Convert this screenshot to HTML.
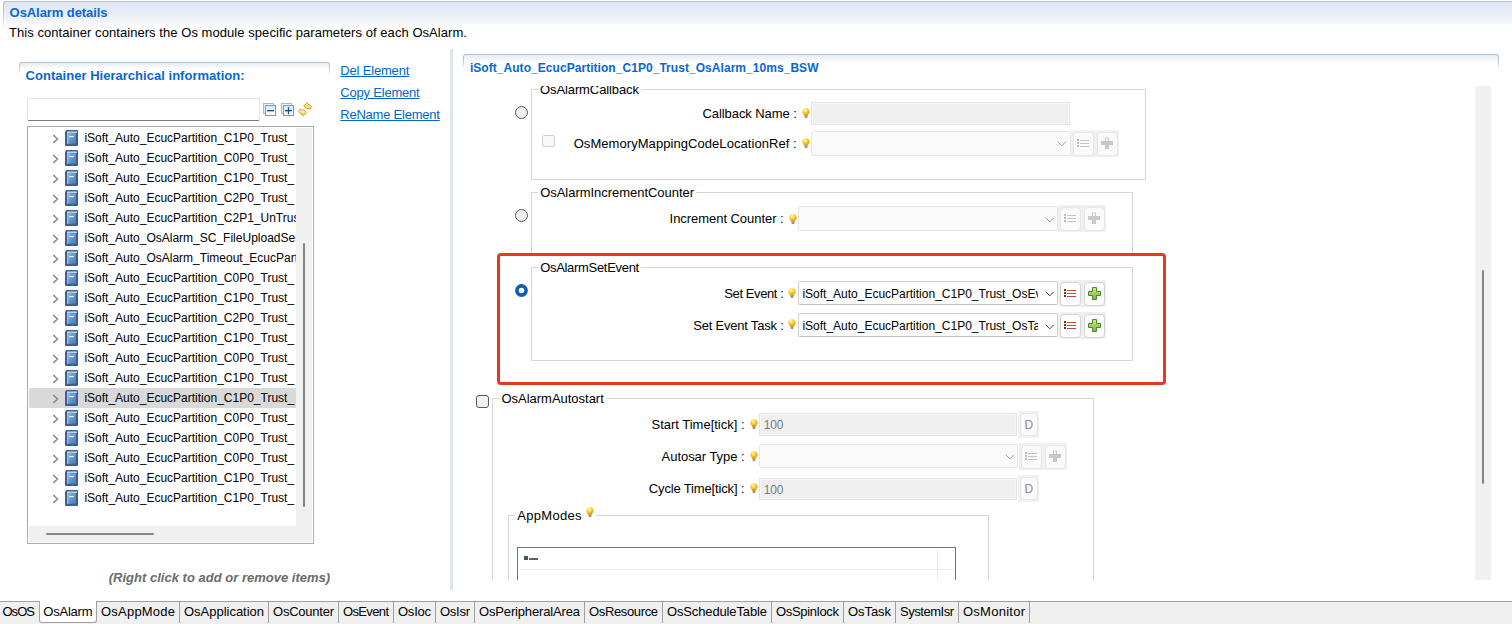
<!DOCTYPE html>
<html><head><meta charset="utf-8"><style>
div{box-sizing:border-box;}
html,body{margin:0;padding:0;width:1512px;height:624px;overflow:hidden;background:#fff;font-family:'Liberation Sans', sans-serif;}
</style></head><body>
<div style="position:relative;width:1512px;height:624px;overflow:hidden;">
<div style="position:absolute;left:3px;top:1px;width:1600px;height:28px;border:1px solid #b3c5dc;border-bottom:none;border-right:none;border-radius:3px 0 0 0;background:linear-gradient(#dde5f0 0px,#f3f6fa 21px,#ffffff 23px);"></div>
<div style="position:absolute;left:2px;top:12px;width:4px;height:20px;background:linear-gradient(rgba(255,255,255,0),#fff);"></div>
<span id="t0" style="position:absolute;left:9.60px;top:6.00px;font-size:13px;line-height:1;font-weight:bold;font-style:normal;color:#0568d6;white-space:nowrap;letter-spacing:-0.071px;">OsAlarm details</span>
<span id="t1" style="position:absolute;left:9.00px;top:25.80px;font-size:13px;line-height:1;font-weight:normal;font-style:normal;color:#000;white-space:nowrap;letter-spacing:0.056px;">This container containers the Os module specific parameters of each OsAlarm.</span>
<div style="position:absolute;left:19px;top:62px;width:311px;height:12px;border:1px solid #b3c5dc;border-bottom:none;border-radius:3px 3px 0 0;background:linear-gradient(#e6ecf4,#ffffff 6px);"></div>
<div style="position:absolute;left:17px;top:66px;width:316px;height:10px;background:linear-gradient(rgba(255,255,255,0),#fff);"></div>
<span id="t2" style="position:absolute;left:25.60px;top:69.30px;font-size:13px;line-height:1;font-weight:bold;font-style:normal;color:#0568d6;white-space:nowrap;letter-spacing:0.025px;">Container Hierarchical information:</span>
<div style="position:absolute;left:27px;top:98px;width:233px;height:23px;border:1px solid #e3e3e3;border-bottom:1px solid #7a7a7a;border-radius:2px;background:#fff;"></div>
<svg style="position:absolute;left:263px;top:103px" width="14" height="14" viewBox="0 0 14 14"><defs><linearGradient id="gim" x1="0" y1="0" x2="0" y2="1"><stop offset="0" stop-color="#cfe6fb"/><stop offset="1" stop-color="#ffffff"/></linearGradient></defs><rect x="0.5" y="0.5" width="10" height="10" fill="#e6f0fa" stroke="#a9b8cc"/><rect x="2.5" y="2.5" width="10" height="10" fill="url(#gim)" stroke="#8596ae"/><rect x="4" y="7" width="7" height="1.3" fill="#1d4a7a"/></svg>
<svg style="position:absolute;left:281px;top:103px" width="14" height="14" viewBox="0 0 14 14"><defs><linearGradient id="gip" x1="0" y1="0" x2="0" y2="1"><stop offset="0" stop-color="#cfe6fb"/><stop offset="1" stop-color="#ffffff"/></linearGradient></defs><rect x="0.5" y="0.5" width="10" height="10" fill="#e6f0fa" stroke="#a9b8cc"/><rect x="2.5" y="2.5" width="10" height="10" fill="url(#gip)" stroke="#8596ae"/><rect x="4" y="7" width="7" height="1.3" fill="#1d4a7a"/><rect x="6.85" y="4.2" width="1.3" height="7" fill="#1d4a7a"/></svg>
<svg style="position:absolute;left:294px;top:98px" width="22" height="22" viewBox="0 0 22 22"><defs><linearGradient id="sg" x1="0" y1="0" x2="0" y2="1"><stop offset="0" stop-color="#fffbe0"/><stop offset="1" stop-color="#f3cf55"/></linearGradient></defs><path d="M13.06 4.61 L9.79 7.88 L12.72 11.14 L13.92 10.03 L16.16 11.4 L17.45 8.56 L15.47 6.5 L13.92 6.67 Z" fill="url(#sg)" stroke="#d99a10" stroke-width="0.95" stroke-linejoin="miter"/><path d="M9.14 17.89 L12.41 14.62 L9.48 11.36 L8.28 12.47 L6.04 11.1 L4.75 13.94 L6.73 16.0 L8.28 15.83 Z" fill="url(#sg)" stroke="#d99a10" stroke-width="0.95" stroke-linejoin="miter"/></svg>
<div style="position:absolute;left:27px;top:126px;width:287px;height:418px;border:1px solid #a9abb0;background:#fff;"></div>
<div style="position:absolute;left:296px;top:128px;width:16px;height:414px;background:#f0f0f0;"></div>
<div style="position:absolute;left:29px;top:526px;width:283px;height:16px;background:#f0f0f0;"></div>
<div style="position:absolute;left:303px;top:243px;width:2px;height:264px;background:#858585;border-radius:1px;"></div>
<div style="position:absolute;left:46px;top:533px;width:108px;height:2px;background:#858585;border-radius:1px;"></div>
<div style="position:absolute;left:28px;top:127px;width:268px;height:399px;overflow:hidden;">
<svg style="position:absolute;left:24px;top:6.6px" width="7" height="10" viewBox="0 0 7 10"><path d="M1.3 0.9 L5.5 4.9 L1.3 8.9" fill="none" stroke="#858585" stroke-width="1.45"/></svg>
<div style="position:absolute;left:37px;top:3px;width:13px;height:16px"><svg width="13" height="16" viewBox="0 0 13 16"><defs><linearGradient id="bk" x1="0" y1="0" x2="1" y2="1"><stop offset="0" stop-color="#8fbbe6"/><stop offset="1" stop-color="#4276b8"/></linearGradient></defs><path d="M1.5 0 L12 0 Q13 0 13 1 L13 15 Q13 16 12 16 L1 16 Q0 16 0 15 L0 1.5 Z" fill="#3a5f95"/><rect x="2" y="1.6" width="10" height="1.1" fill="#ffffff"/><rect x="2" y="3.2" width="9" height="10.6" fill="url(#bk)"/><rect x="2" y="3.2" width="1.2" height="10.6" fill="#a8caee" opacity="0.8"/><rect x="4.2" y="6" width="4.8" height="1.1" fill="#eaf3fc"/></svg></div>
<span id="t3" style="position:absolute;left:56.40px;top:4.84px;font-size:12px;line-height:1;font-weight:normal;font-style:normal;color:#000;white-space:nowrap;letter-spacing:0.000px;">iSoft_Auto_EcucPartition_C1P0_Trust_</span>
<svg style="position:absolute;left:24px;top:26.6px" width="7" height="10" viewBox="0 0 7 10"><path d="M1.3 0.9 L5.5 4.9 L1.3 8.9" fill="none" stroke="#858585" stroke-width="1.45"/></svg>
<div style="position:absolute;left:37px;top:23px;width:13px;height:16px"><svg width="13" height="16" viewBox="0 0 13 16"><defs><linearGradient id="bk" x1="0" y1="0" x2="1" y2="1"><stop offset="0" stop-color="#8fbbe6"/><stop offset="1" stop-color="#4276b8"/></linearGradient></defs><path d="M1.5 0 L12 0 Q13 0 13 1 L13 15 Q13 16 12 16 L1 16 Q0 16 0 15 L0 1.5 Z" fill="#3a5f95"/><rect x="2" y="1.6" width="10" height="1.1" fill="#ffffff"/><rect x="2" y="3.2" width="9" height="10.6" fill="url(#bk)"/><rect x="2" y="3.2" width="1.2" height="10.6" fill="#a8caee" opacity="0.8"/><rect x="4.2" y="6" width="4.8" height="1.1" fill="#eaf3fc"/></svg></div>
<span id="t4" style="position:absolute;left:56.40px;top:24.84px;font-size:12px;line-height:1;font-weight:normal;font-style:normal;color:#000;white-space:nowrap;letter-spacing:0.000px;">iSoft_Auto_EcucPartition_C0P0_Trust_</span>
<svg style="position:absolute;left:24px;top:46.6px" width="7" height="10" viewBox="0 0 7 10"><path d="M1.3 0.9 L5.5 4.9 L1.3 8.9" fill="none" stroke="#858585" stroke-width="1.45"/></svg>
<div style="position:absolute;left:37px;top:43px;width:13px;height:16px"><svg width="13" height="16" viewBox="0 0 13 16"><defs><linearGradient id="bk" x1="0" y1="0" x2="1" y2="1"><stop offset="0" stop-color="#8fbbe6"/><stop offset="1" stop-color="#4276b8"/></linearGradient></defs><path d="M1.5 0 L12 0 Q13 0 13 1 L13 15 Q13 16 12 16 L1 16 Q0 16 0 15 L0 1.5 Z" fill="#3a5f95"/><rect x="2" y="1.6" width="10" height="1.1" fill="#ffffff"/><rect x="2" y="3.2" width="9" height="10.6" fill="url(#bk)"/><rect x="2" y="3.2" width="1.2" height="10.6" fill="#a8caee" opacity="0.8"/><rect x="4.2" y="6" width="4.8" height="1.1" fill="#eaf3fc"/></svg></div>
<span id="t5" style="position:absolute;left:56.40px;top:44.84px;font-size:12px;line-height:1;font-weight:normal;font-style:normal;color:#000;white-space:nowrap;letter-spacing:0.000px;">iSoft_Auto_EcucPartition_C1P0_Trust_</span>
<svg style="position:absolute;left:24px;top:66.6px" width="7" height="10" viewBox="0 0 7 10"><path d="M1.3 0.9 L5.5 4.9 L1.3 8.9" fill="none" stroke="#858585" stroke-width="1.45"/></svg>
<div style="position:absolute;left:37px;top:63px;width:13px;height:16px"><svg width="13" height="16" viewBox="0 0 13 16"><defs><linearGradient id="bk" x1="0" y1="0" x2="1" y2="1"><stop offset="0" stop-color="#8fbbe6"/><stop offset="1" stop-color="#4276b8"/></linearGradient></defs><path d="M1.5 0 L12 0 Q13 0 13 1 L13 15 Q13 16 12 16 L1 16 Q0 16 0 15 L0 1.5 Z" fill="#3a5f95"/><rect x="2" y="1.6" width="10" height="1.1" fill="#ffffff"/><rect x="2" y="3.2" width="9" height="10.6" fill="url(#bk)"/><rect x="2" y="3.2" width="1.2" height="10.6" fill="#a8caee" opacity="0.8"/><rect x="4.2" y="6" width="4.8" height="1.1" fill="#eaf3fc"/></svg></div>
<span id="t6" style="position:absolute;left:56.40px;top:64.84px;font-size:12px;line-height:1;font-weight:normal;font-style:normal;color:#000;white-space:nowrap;letter-spacing:0.000px;">iSoft_Auto_EcucPartition_C2P0_Trust_</span>
<svg style="position:absolute;left:24px;top:86.6px" width="7" height="10" viewBox="0 0 7 10"><path d="M1.3 0.9 L5.5 4.9 L1.3 8.9" fill="none" stroke="#858585" stroke-width="1.45"/></svg>
<div style="position:absolute;left:37px;top:83px;width:13px;height:16px"><svg width="13" height="16" viewBox="0 0 13 16"><defs><linearGradient id="bk" x1="0" y1="0" x2="1" y2="1"><stop offset="0" stop-color="#8fbbe6"/><stop offset="1" stop-color="#4276b8"/></linearGradient></defs><path d="M1.5 0 L12 0 Q13 0 13 1 L13 15 Q13 16 12 16 L1 16 Q0 16 0 15 L0 1.5 Z" fill="#3a5f95"/><rect x="2" y="1.6" width="10" height="1.1" fill="#ffffff"/><rect x="2" y="3.2" width="9" height="10.6" fill="url(#bk)"/><rect x="2" y="3.2" width="1.2" height="10.6" fill="#a8caee" opacity="0.8"/><rect x="4.2" y="6" width="4.8" height="1.1" fill="#eaf3fc"/></svg></div>
<span id="t7" style="position:absolute;left:56.40px;top:84.84px;font-size:12px;line-height:1;font-weight:normal;font-style:normal;color:#000;white-space:nowrap;letter-spacing:0.000px;">iSoft_Auto_EcucPartition_C2P1_UnTrust</span>
<svg style="position:absolute;left:24px;top:106.6px" width="7" height="10" viewBox="0 0 7 10"><path d="M1.3 0.9 L5.5 4.9 L1.3 8.9" fill="none" stroke="#858585" stroke-width="1.45"/></svg>
<div style="position:absolute;left:37px;top:103px;width:13px;height:16px"><svg width="13" height="16" viewBox="0 0 13 16"><defs><linearGradient id="bk" x1="0" y1="0" x2="1" y2="1"><stop offset="0" stop-color="#8fbbe6"/><stop offset="1" stop-color="#4276b8"/></linearGradient></defs><path d="M1.5 0 L12 0 Q13 0 13 1 L13 15 Q13 16 12 16 L1 16 Q0 16 0 15 L0 1.5 Z" fill="#3a5f95"/><rect x="2" y="1.6" width="10" height="1.1" fill="#ffffff"/><rect x="2" y="3.2" width="9" height="10.6" fill="url(#bk)"/><rect x="2" y="3.2" width="1.2" height="10.6" fill="#a8caee" opacity="0.8"/><rect x="4.2" y="6" width="4.8" height="1.1" fill="#eaf3fc"/></svg></div>
<span id="t8" style="position:absolute;left:56.40px;top:104.84px;font-size:12px;line-height:1;font-weight:normal;font-style:normal;color:#000;white-space:nowrap;letter-spacing:0.000px;">iSoft_Auto_OsAlarm_SC_FileUploadService</span>
<svg style="position:absolute;left:24px;top:126.6px" width="7" height="10" viewBox="0 0 7 10"><path d="M1.3 0.9 L5.5 4.9 L1.3 8.9" fill="none" stroke="#858585" stroke-width="1.45"/></svg>
<div style="position:absolute;left:37px;top:123px;width:13px;height:16px"><svg width="13" height="16" viewBox="0 0 13 16"><defs><linearGradient id="bk" x1="0" y1="0" x2="1" y2="1"><stop offset="0" stop-color="#8fbbe6"/><stop offset="1" stop-color="#4276b8"/></linearGradient></defs><path d="M1.5 0 L12 0 Q13 0 13 1 L13 15 Q13 16 12 16 L1 16 Q0 16 0 15 L0 1.5 Z" fill="#3a5f95"/><rect x="2" y="1.6" width="10" height="1.1" fill="#ffffff"/><rect x="2" y="3.2" width="9" height="10.6" fill="url(#bk)"/><rect x="2" y="3.2" width="1.2" height="10.6" fill="#a8caee" opacity="0.8"/><rect x="4.2" y="6" width="4.8" height="1.1" fill="#eaf3fc"/></svg></div>
<span id="t9" style="position:absolute;left:56.40px;top:124.84px;font-size:12px;line-height:1;font-weight:normal;font-style:normal;color:#000;white-space:nowrap;letter-spacing:0.000px;">iSoft_Auto_OsAlarm_Timeout_EcucPartition</span>
<svg style="position:absolute;left:24px;top:146.6px" width="7" height="10" viewBox="0 0 7 10"><path d="M1.3 0.9 L5.5 4.9 L1.3 8.9" fill="none" stroke="#858585" stroke-width="1.45"/></svg>
<div style="position:absolute;left:37px;top:143px;width:13px;height:16px"><svg width="13" height="16" viewBox="0 0 13 16"><defs><linearGradient id="bk" x1="0" y1="0" x2="1" y2="1"><stop offset="0" stop-color="#8fbbe6"/><stop offset="1" stop-color="#4276b8"/></linearGradient></defs><path d="M1.5 0 L12 0 Q13 0 13 1 L13 15 Q13 16 12 16 L1 16 Q0 16 0 15 L0 1.5 Z" fill="#3a5f95"/><rect x="2" y="1.6" width="10" height="1.1" fill="#ffffff"/><rect x="2" y="3.2" width="9" height="10.6" fill="url(#bk)"/><rect x="2" y="3.2" width="1.2" height="10.6" fill="#a8caee" opacity="0.8"/><rect x="4.2" y="6" width="4.8" height="1.1" fill="#eaf3fc"/></svg></div>
<span id="t10" style="position:absolute;left:56.40px;top:144.84px;font-size:12px;line-height:1;font-weight:normal;font-style:normal;color:#000;white-space:nowrap;letter-spacing:0.000px;">iSoft_Auto_EcucPartition_C0P0_Trust_</span>
<svg style="position:absolute;left:24px;top:166.6px" width="7" height="10" viewBox="0 0 7 10"><path d="M1.3 0.9 L5.5 4.9 L1.3 8.9" fill="none" stroke="#858585" stroke-width="1.45"/></svg>
<div style="position:absolute;left:37px;top:163px;width:13px;height:16px"><svg width="13" height="16" viewBox="0 0 13 16"><defs><linearGradient id="bk" x1="0" y1="0" x2="1" y2="1"><stop offset="0" stop-color="#8fbbe6"/><stop offset="1" stop-color="#4276b8"/></linearGradient></defs><path d="M1.5 0 L12 0 Q13 0 13 1 L13 15 Q13 16 12 16 L1 16 Q0 16 0 15 L0 1.5 Z" fill="#3a5f95"/><rect x="2" y="1.6" width="10" height="1.1" fill="#ffffff"/><rect x="2" y="3.2" width="9" height="10.6" fill="url(#bk)"/><rect x="2" y="3.2" width="1.2" height="10.6" fill="#a8caee" opacity="0.8"/><rect x="4.2" y="6" width="4.8" height="1.1" fill="#eaf3fc"/></svg></div>
<span id="t11" style="position:absolute;left:56.40px;top:164.84px;font-size:12px;line-height:1;font-weight:normal;font-style:normal;color:#000;white-space:nowrap;letter-spacing:0.000px;">iSoft_Auto_EcucPartition_C1P0_Trust_</span>
<svg style="position:absolute;left:24px;top:186.6px" width="7" height="10" viewBox="0 0 7 10"><path d="M1.3 0.9 L5.5 4.9 L1.3 8.9" fill="none" stroke="#858585" stroke-width="1.45"/></svg>
<div style="position:absolute;left:37px;top:183px;width:13px;height:16px"><svg width="13" height="16" viewBox="0 0 13 16"><defs><linearGradient id="bk" x1="0" y1="0" x2="1" y2="1"><stop offset="0" stop-color="#8fbbe6"/><stop offset="1" stop-color="#4276b8"/></linearGradient></defs><path d="M1.5 0 L12 0 Q13 0 13 1 L13 15 Q13 16 12 16 L1 16 Q0 16 0 15 L0 1.5 Z" fill="#3a5f95"/><rect x="2" y="1.6" width="10" height="1.1" fill="#ffffff"/><rect x="2" y="3.2" width="9" height="10.6" fill="url(#bk)"/><rect x="2" y="3.2" width="1.2" height="10.6" fill="#a8caee" opacity="0.8"/><rect x="4.2" y="6" width="4.8" height="1.1" fill="#eaf3fc"/></svg></div>
<span id="t12" style="position:absolute;left:56.40px;top:184.84px;font-size:12px;line-height:1;font-weight:normal;font-style:normal;color:#000;white-space:nowrap;letter-spacing:0.000px;">iSoft_Auto_EcucPartition_C2P0_Trust_</span>
<svg style="position:absolute;left:24px;top:206.6px" width="7" height="10" viewBox="0 0 7 10"><path d="M1.3 0.9 L5.5 4.9 L1.3 8.9" fill="none" stroke="#858585" stroke-width="1.45"/></svg>
<div style="position:absolute;left:37px;top:203px;width:13px;height:16px"><svg width="13" height="16" viewBox="0 0 13 16"><defs><linearGradient id="bk" x1="0" y1="0" x2="1" y2="1"><stop offset="0" stop-color="#8fbbe6"/><stop offset="1" stop-color="#4276b8"/></linearGradient></defs><path d="M1.5 0 L12 0 Q13 0 13 1 L13 15 Q13 16 12 16 L1 16 Q0 16 0 15 L0 1.5 Z" fill="#3a5f95"/><rect x="2" y="1.6" width="10" height="1.1" fill="#ffffff"/><rect x="2" y="3.2" width="9" height="10.6" fill="url(#bk)"/><rect x="2" y="3.2" width="1.2" height="10.6" fill="#a8caee" opacity="0.8"/><rect x="4.2" y="6" width="4.8" height="1.1" fill="#eaf3fc"/></svg></div>
<span id="t13" style="position:absolute;left:56.40px;top:204.84px;font-size:12px;line-height:1;font-weight:normal;font-style:normal;color:#000;white-space:nowrap;letter-spacing:0.000px;">iSoft_Auto_EcucPartition_C1P0_Trust_</span>
<svg style="position:absolute;left:24px;top:226.6px" width="7" height="10" viewBox="0 0 7 10"><path d="M1.3 0.9 L5.5 4.9 L1.3 8.9" fill="none" stroke="#858585" stroke-width="1.45"/></svg>
<div style="position:absolute;left:37px;top:223px;width:13px;height:16px"><svg width="13" height="16" viewBox="0 0 13 16"><defs><linearGradient id="bk" x1="0" y1="0" x2="1" y2="1"><stop offset="0" stop-color="#8fbbe6"/><stop offset="1" stop-color="#4276b8"/></linearGradient></defs><path d="M1.5 0 L12 0 Q13 0 13 1 L13 15 Q13 16 12 16 L1 16 Q0 16 0 15 L0 1.5 Z" fill="#3a5f95"/><rect x="2" y="1.6" width="10" height="1.1" fill="#ffffff"/><rect x="2" y="3.2" width="9" height="10.6" fill="url(#bk)"/><rect x="2" y="3.2" width="1.2" height="10.6" fill="#a8caee" opacity="0.8"/><rect x="4.2" y="6" width="4.8" height="1.1" fill="#eaf3fc"/></svg></div>
<span id="t14" style="position:absolute;left:56.40px;top:224.84px;font-size:12px;line-height:1;font-weight:normal;font-style:normal;color:#000;white-space:nowrap;letter-spacing:0.000px;">iSoft_Auto_EcucPartition_C0P0_Trust_</span>
<svg style="position:absolute;left:24px;top:246.6px" width="7" height="10" viewBox="0 0 7 10"><path d="M1.3 0.9 L5.5 4.9 L1.3 8.9" fill="none" stroke="#858585" stroke-width="1.45"/></svg>
<div style="position:absolute;left:37px;top:243px;width:13px;height:16px"><svg width="13" height="16" viewBox="0 0 13 16"><defs><linearGradient id="bk" x1="0" y1="0" x2="1" y2="1"><stop offset="0" stop-color="#8fbbe6"/><stop offset="1" stop-color="#4276b8"/></linearGradient></defs><path d="M1.5 0 L12 0 Q13 0 13 1 L13 15 Q13 16 12 16 L1 16 Q0 16 0 15 L0 1.5 Z" fill="#3a5f95"/><rect x="2" y="1.6" width="10" height="1.1" fill="#ffffff"/><rect x="2" y="3.2" width="9" height="10.6" fill="url(#bk)"/><rect x="2" y="3.2" width="1.2" height="10.6" fill="#a8caee" opacity="0.8"/><rect x="4.2" y="6" width="4.8" height="1.1" fill="#eaf3fc"/></svg></div>
<span id="t15" style="position:absolute;left:56.40px;top:244.84px;font-size:12px;line-height:1;font-weight:normal;font-style:normal;color:#000;white-space:nowrap;letter-spacing:0.000px;">iSoft_Auto_EcucPartition_C1P0_Trust_</span>
<div style="position:absolute;left:1px;top:261px;width:290px;height:20px;background:#d9d9d9;border-radius:2px;"></div>
<svg style="position:absolute;left:24px;top:266.6px" width="7" height="10" viewBox="0 0 7 10"><path d="M1.3 0.9 L5.5 4.9 L1.3 8.9" fill="none" stroke="#858585" stroke-width="1.45"/></svg>
<div style="position:absolute;left:37px;top:263px;width:13px;height:16px"><svg width="13" height="16" viewBox="0 0 13 16"><defs><linearGradient id="bk" x1="0" y1="0" x2="1" y2="1"><stop offset="0" stop-color="#8fbbe6"/><stop offset="1" stop-color="#4276b8"/></linearGradient></defs><path d="M1.5 0 L12 0 Q13 0 13 1 L13 15 Q13 16 12 16 L1 16 Q0 16 0 15 L0 1.5 Z" fill="#3a5f95"/><rect x="2" y="1.6" width="10" height="1.1" fill="#ffffff"/><rect x="2" y="3.2" width="9" height="10.6" fill="url(#bk)"/><rect x="2" y="3.2" width="1.2" height="10.6" fill="#a8caee" opacity="0.8"/><rect x="4.2" y="6" width="4.8" height="1.1" fill="#eaf3fc"/></svg></div>
<span id="t16" style="position:absolute;left:56.40px;top:264.84px;font-size:12px;line-height:1;font-weight:normal;font-style:normal;color:#000;white-space:nowrap;letter-spacing:0.000px;">iSoft_Auto_EcucPartition_C1P0_Trust_</span>
<svg style="position:absolute;left:24px;top:286.6px" width="7" height="10" viewBox="0 0 7 10"><path d="M1.3 0.9 L5.5 4.9 L1.3 8.9" fill="none" stroke="#858585" stroke-width="1.45"/></svg>
<div style="position:absolute;left:37px;top:283px;width:13px;height:16px"><svg width="13" height="16" viewBox="0 0 13 16"><defs><linearGradient id="bk" x1="0" y1="0" x2="1" y2="1"><stop offset="0" stop-color="#8fbbe6"/><stop offset="1" stop-color="#4276b8"/></linearGradient></defs><path d="M1.5 0 L12 0 Q13 0 13 1 L13 15 Q13 16 12 16 L1 16 Q0 16 0 15 L0 1.5 Z" fill="#3a5f95"/><rect x="2" y="1.6" width="10" height="1.1" fill="#ffffff"/><rect x="2" y="3.2" width="9" height="10.6" fill="url(#bk)"/><rect x="2" y="3.2" width="1.2" height="10.6" fill="#a8caee" opacity="0.8"/><rect x="4.2" y="6" width="4.8" height="1.1" fill="#eaf3fc"/></svg></div>
<span id="t17" style="position:absolute;left:56.40px;top:284.84px;font-size:12px;line-height:1;font-weight:normal;font-style:normal;color:#000;white-space:nowrap;letter-spacing:0.000px;">iSoft_Auto_EcucPartition_C0P0_Trust_</span>
<svg style="position:absolute;left:24px;top:306.6px" width="7" height="10" viewBox="0 0 7 10"><path d="M1.3 0.9 L5.5 4.9 L1.3 8.9" fill="none" stroke="#858585" stroke-width="1.45"/></svg>
<div style="position:absolute;left:37px;top:303px;width:13px;height:16px"><svg width="13" height="16" viewBox="0 0 13 16"><defs><linearGradient id="bk" x1="0" y1="0" x2="1" y2="1"><stop offset="0" stop-color="#8fbbe6"/><stop offset="1" stop-color="#4276b8"/></linearGradient></defs><path d="M1.5 0 L12 0 Q13 0 13 1 L13 15 Q13 16 12 16 L1 16 Q0 16 0 15 L0 1.5 Z" fill="#3a5f95"/><rect x="2" y="1.6" width="10" height="1.1" fill="#ffffff"/><rect x="2" y="3.2" width="9" height="10.6" fill="url(#bk)"/><rect x="2" y="3.2" width="1.2" height="10.6" fill="#a8caee" opacity="0.8"/><rect x="4.2" y="6" width="4.8" height="1.1" fill="#eaf3fc"/></svg></div>
<span id="t18" style="position:absolute;left:56.40px;top:304.84px;font-size:12px;line-height:1;font-weight:normal;font-style:normal;color:#000;white-space:nowrap;letter-spacing:0.000px;">iSoft_Auto_EcucPartition_C0P0_Trust_</span>
<svg style="position:absolute;left:24px;top:326.6px" width="7" height="10" viewBox="0 0 7 10"><path d="M1.3 0.9 L5.5 4.9 L1.3 8.9" fill="none" stroke="#858585" stroke-width="1.45"/></svg>
<div style="position:absolute;left:37px;top:323px;width:13px;height:16px"><svg width="13" height="16" viewBox="0 0 13 16"><defs><linearGradient id="bk" x1="0" y1="0" x2="1" y2="1"><stop offset="0" stop-color="#8fbbe6"/><stop offset="1" stop-color="#4276b8"/></linearGradient></defs><path d="M1.5 0 L12 0 Q13 0 13 1 L13 15 Q13 16 12 16 L1 16 Q0 16 0 15 L0 1.5 Z" fill="#3a5f95"/><rect x="2" y="1.6" width="10" height="1.1" fill="#ffffff"/><rect x="2" y="3.2" width="9" height="10.6" fill="url(#bk)"/><rect x="2" y="3.2" width="1.2" height="10.6" fill="#a8caee" opacity="0.8"/><rect x="4.2" y="6" width="4.8" height="1.1" fill="#eaf3fc"/></svg></div>
<span id="t19" style="position:absolute;left:56.40px;top:324.84px;font-size:12px;line-height:1;font-weight:normal;font-style:normal;color:#000;white-space:nowrap;letter-spacing:0.000px;">iSoft_Auto_EcucPartition_C0P0_Trust_</span>
<svg style="position:absolute;left:24px;top:346.6px" width="7" height="10" viewBox="0 0 7 10"><path d="M1.3 0.9 L5.5 4.9 L1.3 8.9" fill="none" stroke="#858585" stroke-width="1.45"/></svg>
<div style="position:absolute;left:37px;top:343px;width:13px;height:16px"><svg width="13" height="16" viewBox="0 0 13 16"><defs><linearGradient id="bk" x1="0" y1="0" x2="1" y2="1"><stop offset="0" stop-color="#8fbbe6"/><stop offset="1" stop-color="#4276b8"/></linearGradient></defs><path d="M1.5 0 L12 0 Q13 0 13 1 L13 15 Q13 16 12 16 L1 16 Q0 16 0 15 L0 1.5 Z" fill="#3a5f95"/><rect x="2" y="1.6" width="10" height="1.1" fill="#ffffff"/><rect x="2" y="3.2" width="9" height="10.6" fill="url(#bk)"/><rect x="2" y="3.2" width="1.2" height="10.6" fill="#a8caee" opacity="0.8"/><rect x="4.2" y="6" width="4.8" height="1.1" fill="#eaf3fc"/></svg></div>
<span id="t20" style="position:absolute;left:56.40px;top:344.84px;font-size:12px;line-height:1;font-weight:normal;font-style:normal;color:#000;white-space:nowrap;letter-spacing:0.000px;">iSoft_Auto_EcucPartition_C1P0_Trust_</span>
<svg style="position:absolute;left:24px;top:366.6px" width="7" height="10" viewBox="0 0 7 10"><path d="M1.3 0.9 L5.5 4.9 L1.3 8.9" fill="none" stroke="#858585" stroke-width="1.45"/></svg>
<div style="position:absolute;left:37px;top:363px;width:13px;height:16px"><svg width="13" height="16" viewBox="0 0 13 16"><defs><linearGradient id="bk" x1="0" y1="0" x2="1" y2="1"><stop offset="0" stop-color="#8fbbe6"/><stop offset="1" stop-color="#4276b8"/></linearGradient></defs><path d="M1.5 0 L12 0 Q13 0 13 1 L13 15 Q13 16 12 16 L1 16 Q0 16 0 15 L0 1.5 Z" fill="#3a5f95"/><rect x="2" y="1.6" width="10" height="1.1" fill="#ffffff"/><rect x="2" y="3.2" width="9" height="10.6" fill="url(#bk)"/><rect x="2" y="3.2" width="1.2" height="10.6" fill="#a8caee" opacity="0.8"/><rect x="4.2" y="6" width="4.8" height="1.1" fill="#eaf3fc"/></svg></div>
<span id="t21" style="position:absolute;left:56.40px;top:364.84px;font-size:12px;line-height:1;font-weight:normal;font-style:normal;color:#000;white-space:nowrap;letter-spacing:0.000px;">iSoft_Auto_EcucPartition_C1P0_Trust_</span>
</div>
<span id="t22" style="position:absolute;left:108.70px;top:571.30px;font-size:13px;line-height:1;font-weight:bold;font-style:italic;color:#6b6b6b;white-space:nowrap;letter-spacing:0.013px;">(Right click to add or remove items)</span>
<span id="t23" style="position:absolute;left:340.30px;top:64.40px;font-size:13px;line-height:1;font-weight:normal;font-style:normal;color:#0066cc;white-space:nowrap;letter-spacing:-0.181px;text-decoration:underline;">Del Element</span>
<span id="t24" style="position:absolute;left:340.30px;top:86.20px;font-size:13px;line-height:1;font-weight:normal;font-style:normal;color:#0066cc;white-space:nowrap;letter-spacing:-0.205px;text-decoration:underline;">Copy Element</span>
<span id="t25" style="position:absolute;left:340.30px;top:108.20px;font-size:13px;line-height:1;font-weight:normal;font-style:normal;color:#0066cc;white-space:nowrap;letter-spacing:-0.231px;text-decoration:underline;">ReName Element</span>
<div style="position:absolute;left:450px;top:49px;width:3px;height:541px;background:#dde5ef;"></div>
<div style="position:absolute;left:463px;top:54px;width:1036px;height:14px;border:1px solid #b3c5dc;border-bottom:none;border-radius:3px 3px 0 0;background:linear-gradient(#e6ecf4,#ffffff 8px);"></div>
<div style="position:absolute;left:461px;top:60px;width:1040px;height:10px;background:linear-gradient(rgba(255,255,255,0),#fff);"></div>
<span id="t26" style="position:absolute;left:469.90px;top:61.64px;font-size:12px;line-height:1;font-weight:bold;font-style:normal;color:#0568d6;white-space:nowrap;letter-spacing:0.049px;">iSoft_Auto_EcucPartition_C1P0_Trust_OsAlarm_10ms_BSW</span>
<div style="position:absolute;left:1475px;top:86px;width:16px;height:494px;background:#f0f0f0;"></div>
<div style="position:absolute;left:1482px;top:270px;width:2px;height:214px;background:#858585;border-radius:1px;"></div>
<div style="position:absolute;left:462px;top:86px;width:1013px;height:494px;overflow:hidden;">
<div style="position:absolute;left:69px;top:3px;width:615px;height:91px;border:1px solid #d6d6d6;"></div>
<div style="position:absolute;left:76px;top:-3px;width:103px;height:12px;background:#fff;"></div>
<span id="t27" style="position:absolute;left:78.00px;top:-2.70px;font-size:13px;line-height:1;font-weight:normal;font-style:normal;color:#000;white-space:nowrap;letter-spacing:-0.102px;">OsAlarmCallback</span>
<svg style="position:absolute;left:53.0px;top:19.799999999999997px" width="13" height="13" viewBox="0 0 13 13"><circle cx="6.5" cy="6.5" r="6" fill="#f0f0f0" stroke="#5a5a5a" stroke-width="1"/></svg>
<span id="t28" style="position:absolute;left:240.50px;top:21.30px;font-size:13px;line-height:1;font-weight:normal;font-style:normal;color:#000;white-space:nowrap;letter-spacing:-0.077px;">Callback Name :</span>
<svg style="position:absolute;left:340px;top:22px" width="8" height="10" viewBox="0 0 8 10"><defs><radialGradient id="bl" cx="0.4" cy="0.35" r="0.6"><stop offset="0" stop-color="#fff7b0"/><stop offset="0.6" stop-color="#f8cc1e"/><stop offset="1" stop-color="#e8a608"/></radialGradient></defs><path d="M4 0.3 C6.2 0.3 7.7 1.9 7.7 3.8 C7.7 5.3 6.6 6 6 7 L2 7 C1.4 6 0.3 5.3 0.3 3.8 C0.3 1.9 1.8 0.3 4 0.3 Z" fill="url(#bl)"/><path d="M2.2 2.8 Q2.6 1.6 3.8 1.3" fill="none" stroke="#ffffff" stroke-width="0.9" opacity="0.85"/><rect x="2.2" y="7.2" width="3.6" height="1.3" fill="#b87838"/><rect x="2.8" y="8.6" width="2.4" height="1.2" fill="#6a7080"/></svg>
<div style="position:absolute;left:349px;top:16px;width:259px;height:23px;border:1px solid #e4e4e4;background:#efefef;box-sizing:border-box;box-shadow:inset 0 0 0 1px #f6f6f6;"></div>
<div style="position:absolute;left:80px;top:48.5px;width:13px;height:12.5px;border:1px solid #cfcfcf;border-radius:2px;background:#f8f8f8;box-sizing:border-box;"></div>
<span id="t29" style="position:absolute;left:111.70px;top:51.20px;font-size:13px;line-height:1;font-weight:normal;font-style:normal;color:#000;white-space:nowrap;letter-spacing:0.061px;">OsMemoryMappingCodeLocationRef :</span>
<svg style="position:absolute;left:340px;top:52px" width="8" height="10" viewBox="0 0 8 10"><defs><radialGradient id="bl" cx="0.4" cy="0.35" r="0.6"><stop offset="0" stop-color="#fff7b0"/><stop offset="0.6" stop-color="#f8cc1e"/><stop offset="1" stop-color="#e8a608"/></radialGradient></defs><path d="M4 0.3 C6.2 0.3 7.7 1.9 7.7 3.8 C7.7 5.3 6.6 6 6 7 L2 7 C1.4 6 0.3 5.3 0.3 3.8 C0.3 1.9 1.8 0.3 4 0.3 Z" fill="url(#bl)"/><path d="M2.2 2.8 Q2.6 1.6 3.8 1.3" fill="none" stroke="#ffffff" stroke-width="0.9" opacity="0.85"/><rect x="2.2" y="7.2" width="3.6" height="1.3" fill="#b87838"/><rect x="2.8" y="8.6" width="2.4" height="1.2" fill="#6a7080"/></svg>
<div style="position:absolute;left:349px;top:45.30000000000001px;width:259.5px;height:24.299999999999983px;border:1px solid #e6e6e6;border-radius:2px;background:#fafafa;box-sizing:border-box;"></div>
<svg style="position:absolute;left:595.2px;top:55.400000000000006px" width="10" height="6" viewBox="0 0 10 6"><path d="M0.8 0.8 L4.8 4.8 L8.8 0.8" fill="none" stroke="#9a9a9a" stroke-width="0.95"/></svg>
<div style="position:absolute;left:609px;top:44px;width:48px;height:27px;background:#f0f0f0;"></div>
<div style="position:absolute;left:611px;top:46px;width:21px;height:24px;border:1px solid #e6e6e6;border-radius:4px;background:#fafafa;box-sizing:border-box;"></div>
<div style="position:absolute;left:635px;top:46px;width:21px;height:24px;border:1px solid #e6e6e6;border-radius:4px;background:#fafafa;box-sizing:border-box;"></div>
<svg style="position:absolute;left:615px;top:53px" width="13" height="9" viewBox="0 0 13 9"><rect x="0" y="0" width="2" height="2" fill="#bdbdbd"/><rect x="0" y="3" width="2" height="2" fill="#bdbdbd"/><rect x="0" y="6" width="2" height="2" fill="#bdbdbd"/><rect x="3" y="1" width="9" height="1" fill="#c4c4c4"/><rect x="3" y="4" width="9" height="1" fill="#c4c4c4"/><rect x="3" y="7" width="9" height="1" fill="#c4c4c4"/></svg>
<svg style="position:absolute;left:639px;top:51px" width="13" height="13" viewBox="0 0 13 13"><path d="M4 0.5 H8 V4 H12 V8 H8 V12 H4 V8 H0 V4 H4 Z" fill="#c8c8c8"/><rect x="5" y="1.3" width="2" height="2.7" fill="#f5f5f5"/></svg>
<div style="position:absolute;left:69px;top:106px;width:602px;height:64px;border:1px solid #d6d6d6;"></div>
<div style="position:absolute;left:76.20000000000005px;top:100px;width:157.8px;height:12px;background:#fff;"></div>
<span id="t30" style="position:absolute;left:78.20px;top:100.00px;font-size:13px;line-height:1;font-weight:normal;font-style:normal;color:#000;white-space:nowrap;letter-spacing:-0.037px;">OsAlarmIncrementCounter</span>
<svg style="position:absolute;left:53.0px;top:122.80000000000001px" width="13" height="13" viewBox="0 0 13 13"><circle cx="6.5" cy="6.5" r="6" fill="#f0f0f0" stroke="#5a5a5a" stroke-width="1"/></svg>
<span id="t31" style="position:absolute;left:207.60px;top:125.90px;font-size:13px;line-height:1;font-weight:normal;font-style:normal;color:#000;white-space:nowrap;letter-spacing:-0.049px;">Increment Counter :</span>
<svg style="position:absolute;left:327px;top:127.5px" width="8" height="10" viewBox="0 0 8 10"><defs><radialGradient id="bl" cx="0.4" cy="0.35" r="0.6"><stop offset="0" stop-color="#fff7b0"/><stop offset="0.6" stop-color="#f8cc1e"/><stop offset="1" stop-color="#e8a608"/></radialGradient></defs><path d="M4 0.3 C6.2 0.3 7.7 1.9 7.7 3.8 C7.7 5.3 6.6 6 6 7 L2 7 C1.4 6 0.3 5.3 0.3 3.8 C0.3 1.9 1.8 0.3 4 0.3 Z" fill="url(#bl)"/><path d="M2.2 2.8 Q2.6 1.6 3.8 1.3" fill="none" stroke="#ffffff" stroke-width="0.9" opacity="0.85"/><rect x="2.2" y="7.2" width="3.6" height="1.3" fill="#b87838"/><rect x="2.8" y="8.6" width="2.4" height="1.2" fill="#6a7080"/></svg>
<div style="position:absolute;left:336px;top:120.4px;width:260px;height:24.19999999999999px;border:1px solid #e6e6e6;border-radius:2px;background:#fafafa;box-sizing:border-box;"></div>
<svg style="position:absolute;left:582.7px;top:130.5px" width="10" height="6" viewBox="0 0 10 6"><path d="M0.8 0.8 L4.8 4.8 L8.8 0.8" fill="none" stroke="#9a9a9a" stroke-width="0.95"/></svg>
<div style="position:absolute;left:596px;top:119px;width:48px;height:27px;background:#f0f0f0;"></div>
<div style="position:absolute;left:598px;top:121px;width:21px;height:24px;border:1px solid #e6e6e6;border-radius:4px;background:#fafafa;box-sizing:border-box;"></div>
<div style="position:absolute;left:622px;top:121px;width:21px;height:24px;border:1px solid #e6e6e6;border-radius:4px;background:#fafafa;box-sizing:border-box;"></div>
<svg style="position:absolute;left:602px;top:128px" width="13" height="9" viewBox="0 0 13 9"><rect x="0" y="0" width="2" height="2" fill="#bdbdbd"/><rect x="0" y="3" width="2" height="2" fill="#bdbdbd"/><rect x="0" y="6" width="2" height="2" fill="#bdbdbd"/><rect x="3" y="1" width="9" height="1" fill="#c4c4c4"/><rect x="3" y="4" width="9" height="1" fill="#c4c4c4"/><rect x="3" y="7" width="9" height="1" fill="#c4c4c4"/></svg>
<svg style="position:absolute;left:626px;top:126px" width="13" height="13" viewBox="0 0 13 13"><path d="M4 0.5 H8 V4 H12 V8 H8 V12 H4 V8 H0 V4 H4 Z" fill="#c8c8c8"/><rect x="5" y="1.3" width="2" height="2.7" fill="#f5f5f5"/></svg>
<div style="position:absolute;left:69px;top:181px;width:602px;height:94px;border:1px solid #d6d6d6;"></div>
<div style="position:absolute;left:76.20000000000005px;top:175px;width:103px;height:12px;background:#fff;"></div>
<span id="t32" style="position:absolute;left:78.20px;top:174.80px;font-size:13px;line-height:1;font-weight:normal;font-style:normal;color:#000;white-space:nowrap;letter-spacing:-0.309px;">OsAlarmSetEvent</span>
<svg style="position:absolute;left:53.0px;top:197.89999999999998px" width="13" height="13" viewBox="0 0 13 13"><circle cx="6.5" cy="6.5" r="4.6" fill="#fff" stroke="#0b5cb7" stroke-width="3.6"/></svg>
<span id="t33" style="position:absolute;left:262.30px;top:201.10px;font-size:13px;line-height:1;font-weight:normal;font-style:normal;color:#000;white-space:nowrap;letter-spacing:-0.409px;">Set Event :</span>
<svg style="position:absolute;left:326px;top:202.2px" width="8" height="10" viewBox="0 0 8 10"><defs><radialGradient id="bl" cx="0.4" cy="0.35" r="0.6"><stop offset="0" stop-color="#fff7b0"/><stop offset="0.6" stop-color="#f8cc1e"/><stop offset="1" stop-color="#e8a608"/></radialGradient></defs><path d="M4 0.3 C6.2 0.3 7.7 1.9 7.7 3.8 C7.7 5.3 6.6 6 6 7 L2 7 C1.4 6 0.3 5.3 0.3 3.8 C0.3 1.9 1.8 0.3 4 0.3 Z" fill="url(#bl)"/><path d="M2.2 2.8 Q2.6 1.6 3.8 1.3" fill="none" stroke="#ffffff" stroke-width="0.9" opacity="0.85"/><rect x="2.2" y="7.2" width="3.6" height="1.3" fill="#b87838"/><rect x="2.8" y="8.6" width="2.4" height="1.2" fill="#6a7080"/></svg>
<div style="position:absolute;left:336.4px;top:195.3px;width:259.4px;height:24.19999999999999px;border:1px solid #cfcfcf;border-bottom-color:#bdbdbd;border-radius:2px;background:#fff;box-sizing:border-box;"></div>
<svg style="position:absolute;left:582.5px;top:205.40000000000003px" width="10" height="6" viewBox="0 0 10 6"><path d="M0.8 0.8 L4.8 4.8 L8.8 0.8" fill="none" stroke="#333" stroke-width="0.95"/></svg>
<div style="position:absolute;left:336.4px;top:195.3px;width:239.39999999999998px;height:24.19999999999999px;overflow:hidden;">
<span id="t34" style="position:absolute;left:4.00px;top:6.44px;font-size:12px;line-height:1;font-weight:normal;font-style:normal;color:#000;white-space:nowrap;letter-spacing:0.000px;">iSoft_Auto_EcucPartition_C1P0_Trust_OsEvent_10ms_BSW</span>
</div>
<div style="position:absolute;left:596px;top:194px;width:48px;height:27px;background:#f0f0f0;"></div>
<div style="position:absolute;left:598px;top:196px;width:21px;height:24px;border:1px solid #d2d2d2;border-radius:4px;background:#ffffff;box-sizing:border-box;"></div>
<div style="position:absolute;left:622px;top:196px;width:21px;height:24px;border:1px solid #d2d2d2;border-radius:4px;background:#ffffff;box-sizing:border-box;"></div>
<svg style="position:absolute;left:602px;top:203px" width="13" height="9" viewBox="0 0 13 9"><rect x="0" y="0" width="2" height="2" fill="#7e2a12"/><rect x="0" y="3" width="2" height="2" fill="#7e2a12"/><rect x="0" y="6" width="2" height="2" fill="#7e2a12"/><rect x="3" y="1" width="9" height="1" fill="#c94f28"/><rect x="3" y="4" width="9" height="1" fill="#c94f28"/><rect x="3" y="7" width="9" height="1" fill="#c94f28"/></svg>
<svg style="position:absolute;left:626px;top:201px" width="13" height="13" viewBox="0 0 13 13"><defs><linearGradient id="pg" x1="0" y1="0" x2="0" y2="1"><stop offset="0" stop-color="#dde86a"/><stop offset="1" stop-color="#78b040"/></linearGradient></defs><path d="M4.5 0.5 H8.5 V4.5 H12.5 V8.5 H8.5 V12.5 H4.5 V8.5 H0.5 V4.5 H4.5 Z" fill="url(#pg)" stroke="#3f8a3a" stroke-width="1"/></svg>
<span id="t35" style="position:absolute;left:231.20px;top:233.10px;font-size:13px;line-height:1;font-weight:normal;font-style:normal;color:#000;white-space:nowrap;letter-spacing:-0.207px;">Set Event Task :</span>
<svg style="position:absolute;left:326px;top:233.3px" width="8" height="10" viewBox="0 0 8 10"><defs><radialGradient id="bl" cx="0.4" cy="0.35" r="0.6"><stop offset="0" stop-color="#fff7b0"/><stop offset="0.6" stop-color="#f8cc1e"/><stop offset="1" stop-color="#e8a608"/></radialGradient></defs><path d="M4 0.3 C6.2 0.3 7.7 1.9 7.7 3.8 C7.7 5.3 6.6 6 6 7 L2 7 C1.4 6 0.3 5.3 0.3 3.8 C0.3 1.9 1.8 0.3 4 0.3 Z" fill="url(#bl)"/><path d="M2.2 2.8 Q2.6 1.6 3.8 1.3" fill="none" stroke="#ffffff" stroke-width="0.9" opacity="0.85"/><rect x="2.2" y="7.2" width="3.6" height="1.3" fill="#b87838"/><rect x="2.8" y="8.6" width="2.4" height="1.2" fill="#6a7080"/></svg>
<div style="position:absolute;left:336.4px;top:227.39999999999998px;width:259.4px;height:24.0px;border:1px solid #cfcfcf;border-bottom-color:#bdbdbd;border-radius:2px;background:#fff;box-sizing:border-box;"></div>
<svg style="position:absolute;left:582.5px;top:237.5px" width="10" height="6" viewBox="0 0 10 6"><path d="M0.8 0.8 L4.8 4.8 L8.8 0.8" fill="none" stroke="#333" stroke-width="0.95"/></svg>
<div style="position:absolute;left:336.4px;top:227.39999999999998px;width:239.39999999999998px;height:24.0px;overflow:hidden;">
<span id="t36" style="position:absolute;left:4.00px;top:6.44px;font-size:12px;line-height:1;font-weight:normal;font-style:normal;color:#000;white-space:nowrap;letter-spacing:0.000px;">iSoft_Auto_EcucPartition_C1P0_Trust_OsTask_10ms_BSW</span>
</div>
<div style="position:absolute;left:596px;top:226px;width:48px;height:27px;background:#f0f0f0;"></div>
<div style="position:absolute;left:598px;top:228px;width:21px;height:24px;border:1px solid #d2d2d2;border-radius:4px;background:#ffffff;box-sizing:border-box;"></div>
<div style="position:absolute;left:622px;top:228px;width:21px;height:24px;border:1px solid #d2d2d2;border-radius:4px;background:#ffffff;box-sizing:border-box;"></div>
<svg style="position:absolute;left:602px;top:235px" width="13" height="9" viewBox="0 0 13 9"><rect x="0" y="0" width="2" height="2" fill="#7e2a12"/><rect x="0" y="3" width="2" height="2" fill="#7e2a12"/><rect x="0" y="6" width="2" height="2" fill="#7e2a12"/><rect x="3" y="1" width="9" height="1" fill="#c94f28"/><rect x="3" y="4" width="9" height="1" fill="#c94f28"/><rect x="3" y="7" width="9" height="1" fill="#c94f28"/></svg>
<svg style="position:absolute;left:626px;top:233px" width="13" height="13" viewBox="0 0 13 13"><defs><linearGradient id="pg" x1="0" y1="0" x2="0" y2="1"><stop offset="0" stop-color="#dde86a"/><stop offset="1" stop-color="#78b040"/></linearGradient></defs><path d="M4.5 0.5 H8.5 V4.5 H12.5 V8.5 H8.5 V12.5 H4.5 V8.5 H0.5 V4.5 H4.5 Z" fill="url(#pg)" stroke="#3f8a3a" stroke-width="1"/></svg>
<div style="position:absolute;left:35px;top:167px;width:669px;height:132px;border:3px solid #e8391f;border-radius:4px;box-sizing:border-box;"></div>
<div style="position:absolute;left:30px;top:312px;width:602px;height:302px;border:1px solid #d6d6d6;"></div>
<div style="position:absolute;left:37.5px;top:306px;width:106.3px;height:12px;background:#fff;"></div>
<span id="t37" style="position:absolute;left:39.50px;top:306.00px;font-size:13px;line-height:1;font-weight:normal;font-style:normal;color:#000;white-space:nowrap;letter-spacing:-0.020px;">OsAlarmAutostart</span>
<div style="position:absolute;left:14px;top:309px;width:13px;height:13px;border:1px solid #5a5a5a;border-radius:3px;background:#f0f0f0;box-sizing:border-box;"></div>
<span id="t38" style="position:absolute;left:189.50px;top:332.00px;font-size:13px;line-height:1;font-weight:normal;font-style:normal;color:#000;white-space:nowrap;letter-spacing:-0.011px;">Start Time[tick] :</span>
<svg style="position:absolute;left:288px;top:333px" width="8" height="10" viewBox="0 0 8 10"><defs><radialGradient id="bl" cx="0.4" cy="0.35" r="0.6"><stop offset="0" stop-color="#fff7b0"/><stop offset="0.6" stop-color="#f8cc1e"/><stop offset="1" stop-color="#e8a608"/></radialGradient></defs><path d="M4 0.3 C6.2 0.3 7.7 1.9 7.7 3.8 C7.7 5.3 6.6 6 6 7 L2 7 C1.4 6 0.3 5.3 0.3 3.8 C0.3 1.9 1.8 0.3 4 0.3 Z" fill="url(#bl)"/><path d="M2.2 2.8 Q2.6 1.6 3.8 1.3" fill="none" stroke="#ffffff" stroke-width="0.9" opacity="0.85"/><rect x="2.2" y="7.2" width="3.6" height="1.3" fill="#b87838"/><rect x="2.8" y="8.6" width="2.4" height="1.2" fill="#6a7080"/></svg>
<div style="position:absolute;left:297.4px;top:327px;width:258.1px;height:23px;border:1px solid #e4e4e4;background:#efefef;box-sizing:border-box;box-shadow:inset 0 0 0 1px #f6f6f6;"></div>
<span id="t39" style="position:absolute;left:301.70px;top:332.94px;font-size:12px;line-height:1;font-weight:normal;font-style:normal;color:#7a7a7a;white-space:nowrap;letter-spacing:-0.166px;">100</span>
<div style="position:absolute;left:556.3px;top:325.2px;width:21px;height:26.5px;background:#f0f0f0;"></div>
<div style="position:absolute;left:557.8px;top:326.7px;width:18px;height:23.5px;border:1px solid #e6e6e6;border-radius:4px;background:#fafafa;box-sizing:border-box;"></div>
<span id="t40" style="position:absolute;left:562.60px;top:333.04px;font-size:12px;line-height:1;font-weight:normal;font-style:normal;color:#8a8a8a;white-space:nowrap;letter-spacing:0.000px;">D</span>
<span id="t41" style="position:absolute;left:199.60px;top:364.20px;font-size:13px;line-height:1;font-weight:normal;font-style:normal;color:#000;white-space:nowrap;letter-spacing:-0.046px;">Autosar Type :</span>
<svg style="position:absolute;left:288px;top:364.5px" width="8" height="10" viewBox="0 0 8 10"><defs><radialGradient id="bl" cx="0.4" cy="0.35" r="0.6"><stop offset="0" stop-color="#fff7b0"/><stop offset="0.6" stop-color="#f8cc1e"/><stop offset="1" stop-color="#e8a608"/></radialGradient></defs><path d="M4 0.3 C6.2 0.3 7.7 1.9 7.7 3.8 C7.7 5.3 6.6 6 6 7 L2 7 C1.4 6 0.3 5.3 0.3 3.8 C0.3 1.9 1.8 0.3 4 0.3 Z" fill="url(#bl)"/><path d="M2.2 2.8 Q2.6 1.6 3.8 1.3" fill="none" stroke="#ffffff" stroke-width="0.9" opacity="0.85"/><rect x="2.2" y="7.2" width="3.6" height="1.3" fill="#b87838"/><rect x="2.8" y="8.6" width="2.4" height="1.2" fill="#6a7080"/></svg>
<div style="position:absolute;left:297.4px;top:358.3px;width:259.1px;height:24.19999999999999px;border:1px solid #e6e6e6;border-radius:2px;background:#fafafa;box-sizing:border-box;"></div>
<svg style="position:absolute;left:543.2px;top:368.40000000000003px" width="10" height="6" viewBox="0 0 10 6"><path d="M0.8 0.8 L4.8 4.8 L8.8 0.8" fill="none" stroke="#9a9a9a" stroke-width="0.95"/></svg>
<div style="position:absolute;left:557px;top:357px;width:48px;height:27px;background:#f0f0f0;"></div>
<div style="position:absolute;left:559px;top:359px;width:21px;height:24px;border:1px solid #e6e6e6;border-radius:4px;background:#fafafa;box-sizing:border-box;"></div>
<div style="position:absolute;left:583px;top:359px;width:21px;height:24px;border:1px solid #e6e6e6;border-radius:4px;background:#fafafa;box-sizing:border-box;"></div>
<svg style="position:absolute;left:563px;top:366px" width="13" height="9" viewBox="0 0 13 9"><rect x="0" y="0" width="2" height="2" fill="#bdbdbd"/><rect x="0" y="3" width="2" height="2" fill="#bdbdbd"/><rect x="0" y="6" width="2" height="2" fill="#bdbdbd"/><rect x="3" y="1" width="9" height="1" fill="#c4c4c4"/><rect x="3" y="4" width="9" height="1" fill="#c4c4c4"/><rect x="3" y="7" width="9" height="1" fill="#c4c4c4"/></svg>
<svg style="position:absolute;left:587px;top:364px" width="13" height="13" viewBox="0 0 13 13"><path d="M4 0.5 H8 V4 H12 V8 H8 V12 H4 V8 H0 V4 H4 Z" fill="#c8c8c8"/><rect x="5" y="1.3" width="2" height="2.7" fill="#f5f5f5"/></svg>
<span id="t42" style="position:absolute;left:186.80px;top:395.90px;font-size:13px;line-height:1;font-weight:normal;font-style:normal;color:#000;white-space:nowrap;letter-spacing:-0.150px;">Cycle Time[tick] :</span>
<svg style="position:absolute;left:288px;top:396.5px" width="8" height="10" viewBox="0 0 8 10"><defs><radialGradient id="bl" cx="0.4" cy="0.35" r="0.6"><stop offset="0" stop-color="#fff7b0"/><stop offset="0.6" stop-color="#f8cc1e"/><stop offset="1" stop-color="#e8a608"/></radialGradient></defs><path d="M4 0.3 C6.2 0.3 7.7 1.9 7.7 3.8 C7.7 5.3 6.6 6 6 7 L2 7 C1.4 6 0.3 5.3 0.3 3.8 C0.3 1.9 1.8 0.3 4 0.3 Z" fill="url(#bl)"/><path d="M2.2 2.8 Q2.6 1.6 3.8 1.3" fill="none" stroke="#ffffff" stroke-width="0.9" opacity="0.85"/><rect x="2.2" y="7.2" width="3.6" height="1.3" fill="#b87838"/><rect x="2.8" y="8.6" width="2.4" height="1.2" fill="#6a7080"/></svg>
<div style="position:absolute;left:297.4px;top:391.8px;width:258.1px;height:21.80000000000001px;border:1px solid #e4e4e4;background:#efefef;box-sizing:border-box;box-shadow:inset 0 0 0 1px #f6f6f6;"></div>
<span id="t43" style="position:absolute;left:301.70px;top:397.74px;font-size:12px;line-height:1;font-weight:normal;font-style:normal;color:#7a7a7a;white-space:nowrap;letter-spacing:-0.166px;">100</span>
<div style="position:absolute;left:556.3px;top:389px;width:21px;height:26.5px;background:#f0f0f0;"></div>
<div style="position:absolute;left:557.8px;top:390.5px;width:18px;height:23.5px;border:1px solid #e6e6e6;border-radius:4px;background:#fafafa;box-sizing:border-box;"></div>
<span id="t44" style="position:absolute;left:562.60px;top:396.84px;font-size:12px;line-height:1;font-weight:normal;font-style:normal;color:#8a8a8a;white-space:nowrap;letter-spacing:0.000px;">D</span>
<div style="position:absolute;left:46px;top:429px;width:481px;height:185px;border:1px solid #d6d6d6;"></div>
<div style="position:absolute;left:53.299999999999955px;top:423px;width:68.2px;height:12px;background:#fff;"></div>
<span id="t45" style="position:absolute;left:55.30px;top:422.50px;font-size:13px;line-height:1;font-weight:normal;font-style:normal;color:#000;white-space:nowrap;letter-spacing:0.292px;">AppModes</span>
<div style="position:absolute;left:122px;top:421px;width:12px;height:12px;background:#fff;"></div>
<svg style="position:absolute;left:124px;top:421.2px" width="8" height="10" viewBox="0 0 8 10"><defs><radialGradient id="bl" cx="0.4" cy="0.35" r="0.6"><stop offset="0" stop-color="#fff7b0"/><stop offset="0.6" stop-color="#f8cc1e"/><stop offset="1" stop-color="#e8a608"/></radialGradient></defs><path d="M4 0.3 C6.2 0.3 7.7 1.9 7.7 3.8 C7.7 5.3 6.6 6 6 7 L2 7 C1.4 6 0.3 5.3 0.3 3.8 C0.3 1.9 1.8 0.3 4 0.3 Z" fill="url(#bl)"/><path d="M2.2 2.8 Q2.6 1.6 3.8 1.3" fill="none" stroke="#ffffff" stroke-width="0.9" opacity="0.85"/><rect x="2.2" y="7.2" width="3.6" height="1.3" fill="#b87838"/><rect x="2.8" y="8.6" width="2.4" height="1.2" fill="#6a7080"/></svg>
<div style="position:absolute;left:55.299999999999955px;top:461.29999999999995px;width:438.5px;height:200px;border:1px solid #6e7580;box-sizing:border-box;"></div>
<div style="position:absolute;left:475px;top:463.79999999999995px;width:1px;height:100px;background:#e3ebf6;"></div>
<div style="position:absolute;left:57px;top:483.29999999999995px;width:434px;height:1px;background:#ececec;"></div>
<div style="position:absolute;left:62px;top:470px;width:4px;height:4px;background:#3d5e45;"></div>
<div style="position:absolute;left:67px;top:472px;width:9px;height:2px;background:#4f6e55;"></div>
</div>
<div style="position:absolute;left:0px;top:601px;width:1512px;height:23px;background:#f0f0f0;border-top:1px solid #a0a0a0;box-sizing:border-box;"></div>
<div style="position:absolute;left:179px;top:602px;width:1px;height:21px;background:#a0a0a0;"></div>
<div style="position:absolute;left:268px;top:602px;width:1px;height:21px;background:#a0a0a0;"></div>
<div style="position:absolute;left:338px;top:602px;width:1px;height:21px;background:#a0a0a0;"></div>
<div style="position:absolute;left:393px;top:602px;width:1px;height:21px;background:#a0a0a0;"></div>
<div style="position:absolute;left:435px;top:602px;width:1px;height:21px;background:#a0a0a0;"></div>
<div style="position:absolute;left:474px;top:602px;width:1px;height:21px;background:#a0a0a0;"></div>
<div style="position:absolute;left:584px;top:602px;width:1px;height:21px;background:#a0a0a0;"></div>
<div style="position:absolute;left:662px;top:602px;width:1px;height:21px;background:#a0a0a0;"></div>
<div style="position:absolute;left:771px;top:602px;width:1px;height:21px;background:#a0a0a0;"></div>
<div style="position:absolute;left:843px;top:602px;width:1px;height:21px;background:#a0a0a0;"></div>
<div style="position:absolute;left:895px;top:602px;width:1px;height:21px;background:#a0a0a0;"></div>
<div style="position:absolute;left:958px;top:602px;width:1px;height:21px;background:#a0a0a0;"></div>
<div style="position:absolute;left:1029px;top:602px;width:1px;height:21px;background:#a0a0a0;"></div>
<div style="position:absolute;left:39px;top:601px;width:58px;height:22px;background:#fff;border:1px solid #a0a0a0;border-top:none;border-radius:0 0 3px 3px;box-sizing:border-box;"></div>
<span id="t46" style="position:absolute;left:2.40px;top:604.90px;font-size:13px;line-height:1;font-weight:normal;font-style:normal;color:#000;white-space:nowrap;letter-spacing:-0.935px;">OsOS</span>
<span id="t47" style="position:absolute;left:43.30px;top:604.90px;font-size:13px;line-height:1;font-weight:normal;font-style:normal;color:#000;white-space:nowrap;letter-spacing:-0.227px;">OsAlarm</span>
<span id="t48" style="position:absolute;left:101.00px;top:604.90px;font-size:13px;line-height:1;font-weight:normal;font-style:normal;color:#000;white-space:nowrap;letter-spacing:0.217px;">OsAppMode</span>
<span id="t49" style="position:absolute;left:184.00px;top:604.90px;font-size:13px;line-height:1;font-weight:normal;font-style:normal;color:#000;white-space:nowrap;letter-spacing:-0.018px;">OsApplication</span>
<span id="t50" style="position:absolute;left:273.00px;top:604.90px;font-size:13px;line-height:1;font-weight:normal;font-style:normal;color:#000;white-space:nowrap;letter-spacing:-0.234px;">OsCounter</span>
<span id="t51" style="position:absolute;left:343.00px;top:604.90px;font-size:13px;line-height:1;font-weight:normal;font-style:normal;color:#000;white-space:nowrap;letter-spacing:-0.643px;">OsEvent</span>
<span id="t52" style="position:absolute;left:398.00px;top:604.90px;font-size:13px;line-height:1;font-weight:normal;font-style:normal;color:#000;white-space:nowrap;letter-spacing:-0.242px;">OsIoc</span>
<span id="t53" style="position:absolute;left:440.00px;top:604.90px;font-size:13px;line-height:1;font-weight:normal;font-style:normal;color:#000;white-space:nowrap;letter-spacing:-0.266px;">OsIsr</span>
<span id="t54" style="position:absolute;left:479.00px;top:604.90px;font-size:13px;line-height:1;font-weight:normal;font-style:normal;color:#000;white-space:nowrap;letter-spacing:-0.155px;">OsPeripheralArea</span>
<span id="t55" style="position:absolute;left:589.00px;top:604.90px;font-size:13px;line-height:1;font-weight:normal;font-style:normal;color:#000;white-space:nowrap;letter-spacing:-0.361px;">OsResource</span>
<span id="t56" style="position:absolute;left:667.00px;top:604.90px;font-size:13px;line-height:1;font-weight:normal;font-style:normal;color:#000;white-space:nowrap;letter-spacing:-0.136px;">OsScheduleTable</span>
<span id="t57" style="position:absolute;left:776.00px;top:604.90px;font-size:13px;line-height:1;font-weight:normal;font-style:normal;color:#000;white-space:nowrap;letter-spacing:-0.306px;">OsSpinlock</span>
<span id="t58" style="position:absolute;left:848.00px;top:604.90px;font-size:13px;line-height:1;font-weight:normal;font-style:normal;color:#000;white-space:nowrap;letter-spacing:-0.069px;">OsTask</span>
<span id="t59" style="position:absolute;left:900.00px;top:604.90px;font-size:13px;line-height:1;font-weight:normal;font-style:normal;color:#000;white-space:nowrap;letter-spacing:-0.475px;">SystemIsr</span>
<span id="t60" style="position:absolute;left:963.00px;top:604.90px;font-size:13px;line-height:1;font-weight:normal;font-style:normal;color:#000;white-space:nowrap;letter-spacing:0.254px;">OsMonitor</span>
</div></body></html>
